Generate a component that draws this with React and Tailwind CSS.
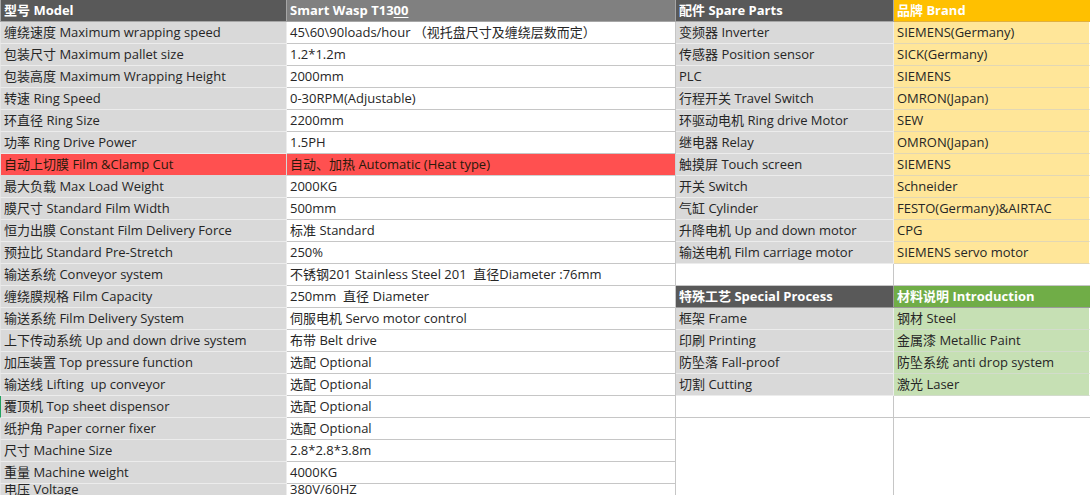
const specs = [
	['缠绕速度 Maximum wrapping speed', '45\\60\\90loads/hour （视托盘尺寸及缠绕层数而定）'],
	['包装尺寸 Maximum pallet size', '1.2*1.2m'],
	['包装高度 Maximum Wrapping Height', '2000mm'],
	['转速 Ring Speed', '0-30RPM(Adjustable)'],
	['环直径 Ring Size', '2200mm'],
	['功率 Ring Drive Power', '1.5PH'],
	['自动上切膜 Film &Clamp Cut', '自动、加热 Automatic (Heat type)', 'red'],
	['最大负载 Max Load Weight', '2000KG'],
	['膜尺寸 Standard Film Width', '500mm'],
	['恒力出膜 Constant Film Delivery Force', '标准 Standard'],
	['预拉比 Standard Pre-Stretch', '250%'],
	['输送系统 Conveyor system', '不锈钢201 Stainless Steel 201  直径Diameter :76mm'],
	['缠绕膜规格 Film Capacity', '250mm  直径 Diameter'],
	['输送系统 Film Delivery System', '伺服电机 Servo motor control'],
	['上下传动系统 Up and down drive system', '布带 Belt drive'],
	['加压装置 Top pressure function', '选配 Optional'],
	['输送线 Lifting  up conveyor', '选配 Optional'],
	['覆顶机 Top sheet dispensor', '选配 Optional', 'mark'],
	['纸护角 Paper corner fixer', '选配 Optional'],
	['尺寸 Machine Size', '2.8*2.8*3.8m'],
	['重量 Machine weight', '4000KG'],
	['电压 Voltage', '380V/60HZ', 'last'],
];

const parts = [
	['变频器 Inverter', 'SIEMENS(Germany)', 'brand'],
	['传感器 Position sensor', 'SICK(Germany)', 'brand'],
	['PLC', 'SIEMENS', 'brand'],
	['行程开关 Travel Switch', 'OMRON(Japan)', 'brand'],
	['环驱动电机 Ring drive Motor', 'SEW', 'brand'],
	['继电器 Relay', 'OMRON(Japan)', 'brand'],
	['触摸屏 Touch screen', 'SIEMENS', 'brand'],
	['开关 Switch', 'Schneider', 'brand'],
	['气缸 Cylinder', 'FESTO(Germany)&AIRTAC', 'brand'],
	['升降电机 Up and down motor', 'CPG', 'brand'],
	['输送电机 Film carriage motor', 'SIEMENS servo motor', 'brand'],
	['', '', 'blank'],
	['特殊工艺 Special Process', '材料说明 Introduction', 'head'],
	['框架 Frame', '钢材 Steel', 'intro'],
	['印刷 Printing', '金属漆 Metallic Paint', 'intro'],
	['防坠落 Fall-proof', '防坠系统 anti drop system', 'intro'],
	['切割 Cutting', '激光 Laser', 'intro'],
	['', '', 'blank'],
];

function Cell({ className, children }) {
	return (
		<div
			className={`flex h-[22px] shrink-0 items-center overflow-hidden whitespace-pre border-b pl-[3px] leading-[21px] ${className}`}>
			{children}
		</div>
	);
}

function SpecRow({ row }) {
	const [label, value, kind] = row;
	const red = kind === 'red';
	const last = kind === 'last';
	const inner = (t) =>
		last ? <span className="relative -top-[5px]">{t}</span> : t;

	return (
		<div className="flex">
			<Cell
				className={`w-[287px] border-l border-r ${
					kind === 'mark' ? 'border-l-[#22a35f]' : 'border-l-[#e4e4e4]'
				} ${
					red
						? 'bg-[#ff5050] border-[#d8d8d8] text-[#2a1a0a]'
						: 'bg-[#d9d9d9] border-[#ececec]'
				}`}>
				{inner(label)}
			</Cell>
			<Cell
				className={`w-[389px] border-r ${
					red ? 'bg-[#ff5050] border-[#d0d0d0] text-[#2a1a0a]' : 'bg-white border-[#c6c6c6]'
				}`}>
				{inner(value)}
			</Cell>
		</div>
	);
}

function PartRow({ row }) {
	const [part, brand, kind] = row;

	if (kind === 'head') {
		return (
			<div className="flex font-bold text-white">
				<Cell className="w-[218px] border-r border-[#9a9a9a] bg-[#595959]">{part}</Cell>
				<Cell className="w-[196px] border-[#9a9a9a] bg-[#70ad47]">{brand}</Cell>
			</div>
		);
	}

	if (kind === 'blank') {
		return (
			<div className="flex">
				<Cell className="w-[218px] border-r border-[#c6c6c6] bg-white" />
				<Cell className="w-[196px] border-[#c6c6c6] bg-white" />
			</div>
		);
	}

	const right =
		kind === 'brand'
			? 'bg-[#ffe699] border-[#e2d7b4]'
			: 'bg-[#c6e0b4] border-[#d2dccb]';

	return (
		<div className="flex">
			<Cell className="w-[218px] border-r border-[#ececec] bg-[#d9d9d9]">{part}</Cell>
			<Cell className={`w-[196px] border-r border-r-white ${right}`}>{brand}</Cell>
		</div>
	);
}

export default function App() {
	return (
		<div className="flex h-[495px] w-[1090px] overflow-hidden bg-white font-['Open_Sans','Noto_Sans_CJK_SC',sans-serif] text-[13px] text-[#262626]">
			{/* Model / spec columns */}
			<div className="flex w-[676px] shrink-0 flex-col">
				<div className="flex font-bold text-white">
					<Cell className="w-[287px] border-l border-r border-[#a6a6a6] bg-[#595959]">型号 Model</Cell>
					<Cell className="w-[389px] border-r border-[#a6a6a6] bg-[#808080]">
						Smart Wasp T13<span className="underline decoration-1 underline-offset-2">00</span>
					</Cell>
				</div>
				{specs.map((row, i) => (
					<SpecRow key={i} row={row} />
				))}
			</div>

			{/* Spare parts / brand columns */}
			<div className="flex w-[414px] shrink-0 flex-col">
				<div className="flex font-bold text-white">
					<Cell className="w-[218px] border-r border-[#a6a6a6] bg-[#595959]">配件 Spare Parts</Cell>
					<Cell className="w-[196px] border-[#e0b040] bg-[#ffc000]">品牌 Brand</Cell>
				</div>
				{parts.map((row, i) => (
					<PartRow key={i} row={row} />
				))}
				<div className="flex flex-1">
					<div className="w-[218px] border-r border-[#c6c6c6] bg-white" />
					<div className="w-[196px] bg-white" />
				</div>
			</div>
		</div>
	);
}
